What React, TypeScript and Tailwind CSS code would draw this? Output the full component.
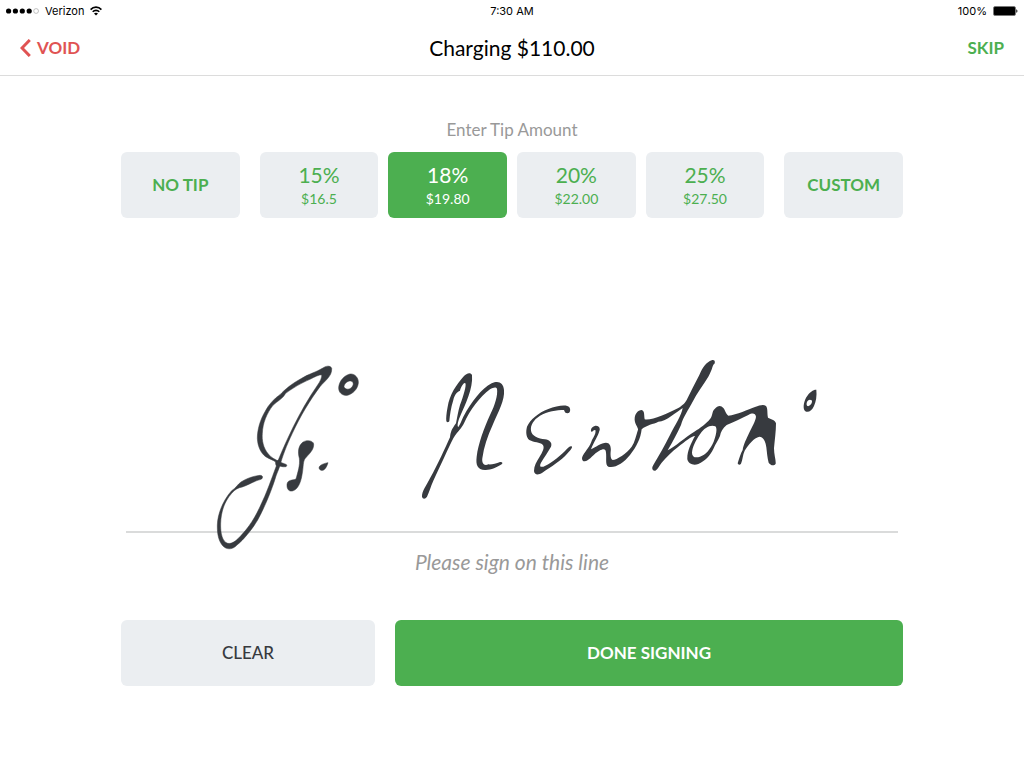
import { useState } from "react";

const tips = [
  { rate: "15%", amount: "$16.5" },
  { rate: "18%", amount: "$19.80" },
  { rate: "20%", amount: "$22.00" },
  { rate: "25%", amount: "$27.50" },
];

function StatusBar() {
  return (
    <div className="grid h-5 grid-cols-3 items-center px-1.5 pt-0.5 font-['Inter',sans-serif] text-[11px] text-black">
      <div className="flex items-center gap-1.5">
        <svg width="33" height="6" viewBox="0 0 33 6" aria-hidden="true">
          <circle cx="2.6" cy="3" r="2.6" />
          <circle cx="9.4" cy="3" r="2.6" />
          <circle cx="16.3" cy="3" r="2.6" />
          <circle cx="23.2" cy="3" r="2.6" />
          <circle cx="30.1" cy="3" r="2.4" fill="none" stroke="#999" strokeWidth="0.6" />
        </svg>
        <span>Verizon</span>
        <svg width="12" height="10" viewBox="0 0 12 10" fill="none" stroke="#000" strokeWidth="1.6" aria-hidden="true">
          <path d="M0.6 3.6C3.6 0.3 8.4 0.3 11.4 3.6" />
          <path d="M2.7 5.8C4.6 3.9 7.4 3.9 9.3 5.8" />
          <path d="M6 9.6L4 7.5C5.1 6.5 6.9 6.5 8 7.5Z" fill="#000" stroke="none" />
        </svg>
      </div>
      <div className="text-center">7:30 AM</div>
      <div className="flex items-center justify-end gap-1.5">
        <span>100%</span>
        <svg width="25" height="10" viewBox="0 0 25 10" aria-hidden="true">
          <rect x="0.5" y="0.5" width="22" height="9" rx="1.5" fill="#000" stroke="#777" strokeWidth="0.8" />
          <path d="M23.3 3.2C24.8 3.7 24.8 6.3 23.3 6.8Z" />
        </svg>
      </div>
    </div>
  );
}

function Signature() {
  return (
    <svg
      className="absolute bottom-[-20px] left-0 w-full"
      viewBox="126 331 772 220"
      fill="#373a3f"
      fillRule="evenodd"
      role="img"
      aria-label="Signature"
    >
      <g transform="translate(205 350) scale(0.33333)" stroke="#373a3f" strokeWidth="1.5">
        <path d="M378 52C372 46 362 48 352 55C335 66 310 72 290 85C262 100 240 118 225 134C208 145 190 165 180 185C165 210 157 240 157 265C158 290 168 310 182 320C195 328 205 330 212 336L214 345C224 348 234 352 243 350C247 347 246 343 240 342L222 335C212 328 200 325 190 312C175 295 170 270 172 250C173 220 185 190 204 166C215 155 235 145 242 130C262 115 290 98 315 88C330 80 342 74 352 74L372 68Z" />
        <path d="M380 55C376 46 360 50 350 72C352 82 345 95 338 105C310 145 285 190 265 230C248 265 232 300 220 330C213 334 210 338 214 348C200 385 185 430 165 470C145 515 120 545 100 565C88 577 78 582 68 580C52 575 46 550 47 520C48 485 58 455 80 430C90 418 100 413 112 411C130 405 150 392 168 388C175 384 174 376 165 376C145 378 122 386 108 396C98 403 92 415 80 422C55 450 38 490 37 525C36 560 45 585 62 594C75 600 88 594 96 585C115 570 140 540 158 510C180 470 202 415 213 378C217 366 223 354 226 344C230 325 245 285 262 250C285 200 315 150 345 110C360 92 382 78 380 55Z" />
        <path d="M326 282C325 272 305 268 293 277C280 288 278 305 283 325C286 345 278 368 273 387C262 392 248 388 246 403C245 418 252 425 262 423C277 420 287 400 291 375C296 350 293 335 301 325C312 312 327 300 326 282Z" />
        <path d="M369 338C358 340 342 345 342 354C343 360 350 363 356 360C363 355 366 348 369 338Z" />
        <path d="M435 72C450 70 462 85 460 100C457 118 445 130 428 136C412 138 400 128 401 112C403 92 418 76 435 72ZM438 93C428 92 418 100 417 110C420 118 430 120 438 114C446 107 448 97 438 93Z" />
      </g>
      <g transform="translate(410 360) scale(0.33333)">
        <path d="M186 45C182 36 170 38 160 50C140 72 118 105 113 140C109 160 108 175 109 184C112 188 117 187 118 183C120 165 122 145 130 120C134 103 141 96 150 92C152 82 162 65 166 70C170 75 160 110 150 135C144 155 142 170 138 190C125 208 122 215 120 232C105 265 85 310 60 355C50 375 35 395 36 410C38 418 46 418 51 410C58 395 62 380 70 362C90 320 115 265 130 235C145 212 155 205 162 190C180 150 210 110 240 88C250 82 258 80 261 86C264 105 255 135 240 165C222 205 205 250 200 290C197 315 202 328 225 330C240 331 262 322 275 313C280 308 276 305 270 306C258 311 245 314 235 313C222 320 215 308 217 295C222 260 232 230 248 195C265 155 285 120 282 90C280 68 265 60 245 70C215 85 185 125 160 170C155 180 150 195 145 201C140 198 145 180 152 165C165 135 190 85 186 45Z" />
        <path d="M473 160C480 160 483 150 478 142C470 132 440 138 415 147C385 158 360 180 351 200C347 215 348 232 358 240C372 248 390 246 398 254C405 262 398 275 388 292C380 305 372 318 372 333C373 345 385 346 397 338C425 320 455 300 470 283C480 272 487 264 486 260C482 256 475 262 465 273C445 293 415 315 400 320C390 322 388 318 393 308C402 292 415 275 423 260C428 248 418 240 405 238C385 235 365 228 363 212C361 195 370 180 390 167C412 155 440 150 462 150C464 156 466 160 473 160Z" />
      </g>
      <g transform="translate(570 350) scale(0.33333)">
        <path d="M64 245C60 238 66 230 76 227C86 226 92 234 88 243C84 258 72 275 63 298C75 292 95 278 108 278C120 278 124 290 122 305C121 318 122 328 128 330C140 330 170 310 185 290C195 275 198 258 203 242C208 235 195 225 194 210C193 193 203 180 215 180C224 182 222 195 224 208C245 212 290 192 325 174C340 165 345 158 350 150C362 125 375 100 388 75C398 52 410 36 425 31C433 28 437 34 433 42C428 42 428 58 415 80C400 105 380 130 368 155C355 180 340 200 333 225C322 250 308 275 293 301C315 290 345 262 373 245C390 235 410 220 420 207C428 200 425 185 434 177C443 166 453 165 460 174C466 180 466 190 475 197C500 195 535 178 555 171C570 166 580 162 588 168C594 175 591 190 594 203C602 208 614 208 618 220C618 245 614 270 612 295C612 315 618 330 617 341C612 349 601 346 596 338C592 325 591 308 589 292C586 270 578 260 568 260C552 263 535 285 524 302C518 315 518 330 513 341C510 346 504 345 503 340C508 325 512 310 518 300C520 285 530 265 537 250C546 230 556 215 558 200C556 190 548 188 535 195C515 205 490 217 470 225C458 235 452 245 450 258C444 272 437 280 430 297C420 318 405 332 385 342C370 347 355 342 352 328C351 305 362 282 375 258C365 258 345 275 325 290C305 305 290 320 275 338C268 346 264 358 256 362C248 364 243 355 250 345C265 320 285 285 300 255C315 225 335 195 338 174C320 185 290 214 265 215C250 223 230 224 215 238C212 265 200 290 180 315C160 340 135 355 115 350C105 345 110 325 108 308C107 295 100 296 88 302C72 310 60 330 45 334C36 335 34 325 38 318C48 300 60 290 66 270C75 255 78 247 76 240C70 239 69 246 64 245ZM436 229C422 223 403 233 391 251C376 272 367 292 366 308C366 321 376 325 390 320C407 314 421 298 431 275C438 257 443 236 436 229Z" />
      </g>
      <g transform="translate(690 350) scale(0.33333)">
        <path d="M379 119C372 118 358 126 349 142C340 158 338 178 346 184C355 189 366 182 372 168C378 155 381 138 379 119ZM360 149C351 149 347 163 352 168C361 171 369 156 365 151Z" />
      </g>
    </svg>
  );
}

const tile = "h-16.5 flex-1 cursor-pointer rounded-md";

export default function App() {
  const [selected, setSelected] = useState("18%");
  const [signed, setSigned] = useState(true);

  return (
    <div className="min-h-screen bg-white font-['Lato',sans-serif] text-black">
      <StatusBar />
      <header className="grid h-14 grid-cols-3 items-center border-b border-[#dcdcdc] px-5">
        <button type="button" className="flex cursor-pointer items-center gap-1.5 justify-self-start text-[17px] font-bold text-[#e05353]">
          <svg width="11" height="18" viewBox="0 0 11 18" fill="none" stroke="currentColor" strokeWidth="3" aria-hidden="true">
            <path d="M9.8 1L2 9L9.8 17" />
          </svg>
          VOID
        </button>
        <h1 className="text-center text-[21px] leading-7">Charging $110.00</h1>
        <button type="button" className="cursor-pointer justify-self-end text-[17px] font-bold text-[#4caf50]">
          SKIP
        </button>
      </header>

      <main className="mx-auto max-w-[814px] px-4 pt-10">
        <h2 className="pb-2 text-center text-[17px] leading-7 text-[#999]">Enter Tip Amount</h2>
        <div className="flex gap-2.5 text-[#4caf50]">
          <button type="button" className={`${tile} mr-2.5 bg-[#ebeef1] text-[17px] font-bold`}>
            NO TIP
          </button>
          {tips.map((tip) => (
            <button
              key={tip.rate}
              type="button"
              aria-pressed={selected === tip.rate}
              onClick={() => setSelected(tip.rate)}
              className={`${tile} flex flex-col items-center justify-center ${
                selected === tip.rate ? "bg-[#4caf50] text-white" : "bg-[#ebeef1]"
              }`}
            >
              <span className="text-[21px] leading-7">{tip.rate}</span>
              <span className="text-sm leading-5">{tip.amount}</span>
            </button>
          ))}
          <button type="button" className={`${tile} ml-2.5 bg-[#ebeef1] text-[17px] font-bold`}>
            CUSTOM
          </button>
        </div>

        <div className="relative mx-1.25 h-[315px] border-b-2 border-[#dadbdb]">{signed && <Signature />}</div>
        <p className="pt-[15px] text-center text-[21px] leading-7 text-[#999] italic">Please sign on this line</p>

        <div className="grid grid-cols-[1fr_2fr] gap-5 pt-11">
          <button
            type="button"
            onClick={() => setSigned(false)}
            className="h-16.5 cursor-pointer rounded-md bg-[#ebeef1] text-[17px] font-medium text-[#373a3f]"
          >
            CLEAR
          </button>
          <button type="button" className="h-16.5 cursor-pointer rounded-md bg-[#4caf50] text-[17px] font-bold text-white">
            DONE SIGNING
          </button>
        </div>
      </main>
    </div>
  );
}
